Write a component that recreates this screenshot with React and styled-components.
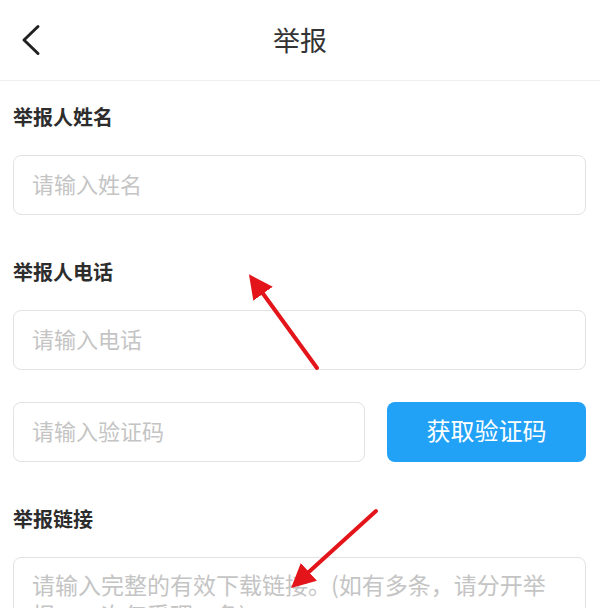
import React from 'react'
import styled, { createGlobalStyle } from 'styled-components'

const GlobalStyle = createGlobalStyle`
  html, body {
    margin: 0;
    padding: 0;
    background: #fff;
    overflow: hidden;
  }
  body {
    font-family: "Noto Sans CJK SC", "Noto Sans", sans-serif;
    color: #333;
  }
  * { box-sizing: border-box; }
`

function App() {
  return (
    <>
      <GlobalStyle />
      <Page>
        <Header>
          <BackBtn aria-label="返回">
            <svg width="24" height="32" viewBox="0 0 24 32" fill="none">
              <path d="M19 2.5 L5 16 L19 29.5" stroke="#222" strokeWidth="3" strokeLinecap="round" strokeLinejoin="round" />
            </svg>
          </BackBtn>
          <Title>举报</Title>
          <span />
        </Header>

        <Form>
          <Label first>举报人姓名</Label>
          <Input placeholder="请输入姓名" />

          <Label>举报人电话</Label>
          <Input placeholder="请输入电话" />

          <CodeRow>
            <Input placeholder="请输入验证码" />
            <CodeButton type="button">获取验证码</CodeButton>
          </CodeRow>

          <Label>举报链接</Label>
          <TextArea placeholder="请输入完整的有效下载链接。(如有多条，请分开举报，一次仅受理一条)" />
        </Form>

        {/* red arrows drawn over the shot */}
        <Marks width="600" height="608" viewBox="0 0 600 608">
          <defs>
            <marker id="head" markerWidth="6" markerHeight="6" refX="3" refY="3" orient="auto" markerUnits="strokeWidth">
              <path d="M0 0 L6 3 L0 6 Z" fill="#e3151b" />
            </marker>
          </defs>
          <line x1="317" y1="368" x2="256" y2="284" stroke="#e3151b" strokeWidth="4" strokeLinecap="round" markerEnd="url(#head)" />
          <line x1="376" y1="511" x2="300" y2="580" stroke="#e3151b" strokeWidth="4" strokeLinecap="round" markerEnd="url(#head)" />
        </Marks>
      </Page>
    </>
  )
}

export default App

const Page = styled.div`
  position: relative;
  width: 600px;
  min-height: 608px;
  background: #fff;
`

const Header = styled.header`
  height: 81px;
  display: grid;
  grid-template-columns: 80px 1fr 80px;
  align-items: center;
  border-bottom: 1px solid #f0f0f0;
`

const BackBtn = styled.button`
  border: 0;
  background: transparent;
  padding: 0 0 0 19px;
  height: 100%;
  display: flex;
  align-items: center;
  cursor: pointer;
`

const Title = styled.h1`
  margin: 0;
  text-align: center;
  font-size: 27px;
  font-weight: 400;
  color: #333;
  padding-bottom: 2px;
`

const Form = styled.div`
  padding: 0 14px 0 13px;
  display: flex;
  flex-direction: column;
`

const Label = styled.div`
  margin-top: ${p => (p.first ? '25px' : '46px')};
  margin-bottom: 28px;
  height: 21px;
  line-height: 21px;
  font-size: 20px;
  font-weight: 700;
  color: #2d2d2d;
`

const Input = styled.input`
  width: 100%;
  height: 60px;
  border: 1px solid #e2e2e2;
  border-radius: 8px;
  padding: 0 18px 5px;
  font-family: inherit;
  font-size: 22px;
  color: #333;
  outline: none;
  background: #fff;

  &::placeholder {
    color: #c4c4c4;
  }
`

const CodeRow = styled.div`
  margin-top: 32px;
  display: grid;
  grid-template-columns: 1fr 199px;
  gap: 22px;
`

const CodeButton = styled.button`
  height: 60px;
  border: 0;
  border-radius: 8px;
  padding: 0 0 5px;
  background: #22a2f6;
  color: #fff;
  font-family: inherit;
  font-size: 24px;
  cursor: pointer;
`

const TextArea = styled.textarea`
  width: 100%;
  height: 160px;
  border: 1px solid #e2e2e2;
  border-radius: 8px;
  padding: 11px 18px;
  font-family: inherit;
  font-size: 23px;
  line-height: 30px;
  resize: none;
  outline: none;

  &::placeholder {
    color: #c4c4c4;
  }
`

const Marks = styled.svg`
  position: absolute;
  top: 0;
  left: 0;
  pointer-events: none;
`
